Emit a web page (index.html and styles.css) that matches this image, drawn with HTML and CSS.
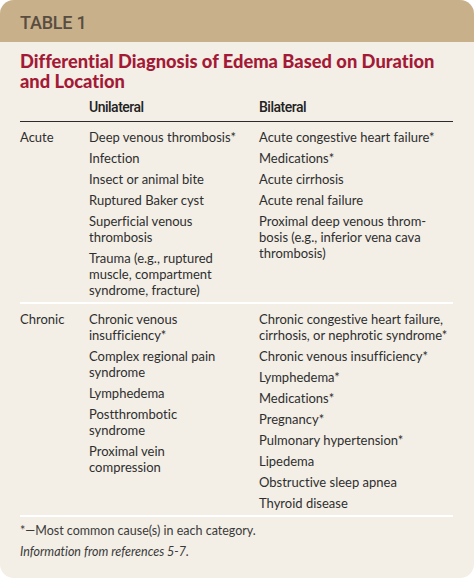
FILE: index.html
```html
<!DOCTYPE html>
<html>
<head>
<meta charset="utf-8">
<link rel="stylesheet" href="styles.css">
</head>
<body>
<div class="card">
  <div class="band"><span class="band-label">TABLE 1</span></div>
  <h1 class="title">Differential Diagnosis of Edema Based on Duration and Location</h1>
  <div class="row head">
    <div></div>
    <div class="colhead">Unilateral</div>
    <div class="colhead">Bilateral</div>
  </div>
  <div class="row section">
    <div class="label">Acute</div>
    <ul class="list">
      <li>Deep venous thrombosis*</li>
      <li>Infection</li>
      <li>Insect or animal bite</li>
      <li>Ruptured Baker cyst</li>
      <li>Superficial venous<br>thrombosis</li>
      <li>Trauma (e.g., ruptured<br>muscle, compartment<br>syndrome, fracture)</li>
    </ul>
    <ul class="list">
      <li>Acute congestive heart failure*</li>
      <li>Medications*</li>
      <li>Acute cirrhosis</li>
      <li>Acute renal failure</li>
      <li>Proximal deep venous throm-<br>bosis (e.g., inferior vena cava<br>thrombosis)</li>
    </ul>
  </div>
  <div class="row section">
    <div class="label">Chronic</div>
    <ul class="list">
      <li>Chronic venous<br>insufficiency*</li>
      <li>Complex regional pain<br>syndrome</li>
      <li>Lymphedema</li>
      <li>Postthrombotic<br>syndrome</li>
      <li>Proximal vein<br>compression</li>
    </ul>
    <ul class="list">
      <li>Chronic congestive heart failure,<br>cirrhosis, or nephrotic syndrome*</li>
      <li>Chronic venous insufficiency*</li>
      <li>Lymphedema*</li>
      <li>Medications*</li>
      <li>Pregnancy*</li>
      <li>Pulmonary hypertension*</li>
      <li>Lipedema</li>
      <li>Obstructive sleep apnea</li>
      <li>Thyroid disease</li>
    </ul>
  </div>
  <div class="notes">
    <p class="note">*—Most common cause(s) in each category.</p>
    <p class="note source">Information from references 5-7.</p>
  </div>
</div>
</body>
</html>
```
FILE: styles.css
```css
html, body {
  margin: 0;
  padding: 0;
  background: #ffffff;
}
body {
  width: 474px;
  height: 579px;
  overflow: hidden;
}
.card {
  width: 474px;
  height: 578px;
  background: #f3eee6;
  border-radius: 14px;
  overflow: hidden;
  font-family: Lato, "Open Sans", sans-serif;
  font-variant-ligatures: no-common-ligatures;
  font-feature-settings: "liga" 0, "clig" 0;
  color: #2e2e2e;
}
.band {
  height: 42px;
  background: #c8b08b;
  display: flex;
  align-items: center;
  padding-left: 20px;
  padding-top: 2px;
  box-sizing: border-box;
}
.band-label {
  font-family: Roboto, sans-serif;
  font-weight: 500;
  font-size: 18px;
  color: #594d40;
  letter-spacing: -0.2px;
}
.title {
  margin: 0;
  padding: 9px 20px 0 20px;
  font-size: 18.3px;
  line-height: 20px;
  font-weight: 900;
  color: #a31a37;
}
.row {
  display: grid;
  grid-template-columns: 69px 170px 1fr;
  margin: 0 21px 0 20px;
}
.head {
  padding-top: 8px;
  padding-bottom: 6px;
  border-bottom: 1.5px solid #2b2b2b;
}
.colhead {
  font-family: Roboto, sans-serif;
  font-weight: 500;
  font-size: 14px;
  line-height: 16px;
  color: #222;
  letter-spacing: -0.5px;
}
.section {
  padding-top: 7px;
  padding-bottom: 4px;
  border-bottom: 2px solid #ffffff;
}
.label, .list li {
  font-size: 13px;
  line-height: 16px;
}
.list {
  list-style: none;
  margin: 0;
  padding: 0;
  display: flex;
  flex-direction: column;
  gap: 5px;
}
.notes {
  padding: 6px 20px 0 20px;
  display: flex;
  flex-direction: column;
  gap: 5px;
}
.note {
  margin: 0;
  font-size: 12.5px;
  line-height: 16px;
  color: #3a3a3a;
}
.source {
  font-style: italic;
}
```
